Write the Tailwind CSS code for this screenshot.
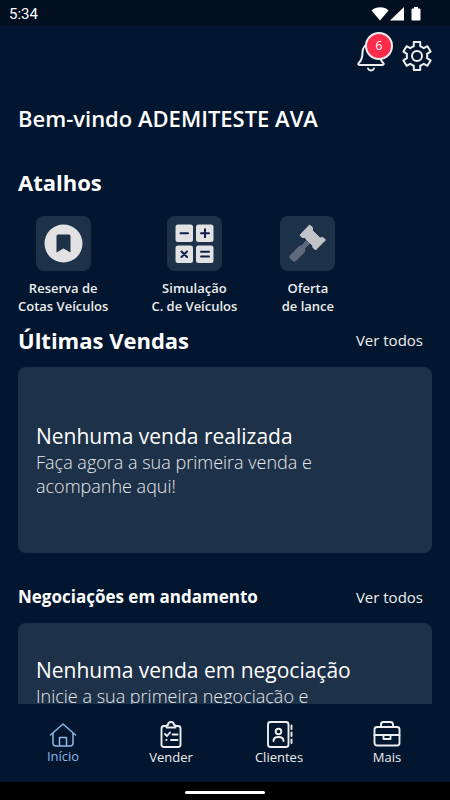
<!DOCTYPE html>
<html lang="pt-BR">
<head>
    <meta charset="UTF-8">
    <meta name="viewport" content="width=device-width, initial-scale=1.0">
    <title>Início</title>
    <script src="https://cdn.jsdelivr.net/npm/@tailwindcss/browser@4"></script>
</head>
<body class="flex h-screen flex-col overflow-hidden bg-[#02162f] font-['Open_Sans',sans-serif] text-white">
    <!-- Status bar -->
    <div class="flex h-[26px] shrink-0 items-center justify-between bg-[#020f20] pt-[2px] pr-[29px] pl-[9px]">
        <span class="font-[Roboto,sans-serif] text-[15px]">5:34</span>
        <svg class="h-[14px] w-[50px]" viewBox="0 0 50 14" fill="#fff" aria-hidden="true">
            <path d="M0.500 3.500C5 -0.800 13.500 -0.800 17.500 3.500L9 13.500Z"/>
            <path d="M33 0V13.500H19Z"/>
            <path d="M43 0H47V1.500H48.500Q49.500 1.500 49.500 2.500V12.500Q49.500 13.500 48.500 13.500H41.500Q40.500 13.500 40.500 12.500V2.500Q40.500 1.500 41.500 1.500H43Z"/>
        </svg>
    </div>

    <header class="flex h-[60px] shrink-0 items-center justify-end gap-[14px] pr-[17px]">
        <button type="button" class="relative" aria-label="Notificações">
            <svg class="h-8 w-8" viewBox="0 0 32 32" fill="none" stroke="#eee" stroke-width="2" stroke-linecap="round" stroke-linejoin="round">
                <path d="M16 3.500C10.500 3.500 7.500 7.500 7.500 12.500C7.500 18 6.500 20.500 3.800 23C2.800 24.200 3.300 25 4.500 25H27.500C28.700 25 29.200 24.200 28.200 23C25.500 20.500 24.500 18 24.500 12.500C24.500 7.500 21.500 3.500 16 3.500Z"/>
                <path d="M13 28.500C14 31 18 31 19 28.500"/>
            </svg>
            <span class="absolute -top-2 left-[10px] flex h-7 w-7 items-center justify-center rounded-full border-2 border-[#eee] bg-[#fe2b4b] text-[12px]">6</span>
        </button>
        <button type="button" aria-label="Configurações">
            <svg class="h-8 w-8" viewBox="0 0 32 32" fill="none" stroke="#eee" stroke-width="2" stroke-linejoin="round">
                <path d="M12.800 2H19.200V6.200Q21.200 6.800 22.800 8.200L26.400 6.200L29.600 11.600L26 13.800Q26.500 16 26 18.200L29.600 20.400L26.400 25.800L22.800 23.800Q21.200 25.200 19.200 25.800V30H12.800V25.800Q10.800 25.200 9.200 23.800L5.600 25.800L2.400 20.400L6 18.200Q5.500 16 6 13.800L2.400 11.600L5.600 6.200L9.200 8.200Q10.800 6.800 12.800 6.200Z"/>
                <circle cx="16" cy="16" r="5"/>
            </svg>
        </button>
    </header>

    <main class="min-h-0 flex-1 overflow-hidden px-[18px] pt-4">
        <h1 class="text-[22px] leading-8 font-semibold">Bem-vindo ADEMITESTE AVA</h1>

        <h2 class="mt-8 text-[22px] leading-8 font-bold">Atalhos</h2>
        <div class="mt-[18px] flex gap-[43px] text-center text-[13px] leading-[18px] font-semibold text-[#eee]">
            <button type="button" class="flex flex-col items-center gap-2">
                <span class="flex h-[55px] w-[55px] items-center justify-center rounded-lg bg-[#1d3149]">
                    <svg class="h-[39px] w-[39px]" viewBox="0 0 39 39">
                        <circle cx="19.500" cy="19.500" r="19" fill="#e2e2e4"/>
                        <path d="M12.500 12Q12.500 10.500 14 10.500H25Q26.500 10.500 26.500 12V28.500L19.500 24.500L12.500 28.500Z" fill="#1d3149"/>
                    </svg>
                </span>
                <span>Reserva de<br>Cotas Veículos</span>
            </button>
            <button type="button" class="flex flex-col items-center gap-2">
                <span class="flex h-[55px] w-[55px] items-center justify-center rounded-lg bg-[#1d3149]">
                    <svg class="h-[39px] w-[39px]" viewBox="0 0 39 39" stroke="#101d4a" stroke-width="2" stroke-linecap="round">
                        <g fill="#e2e2e4" stroke="none">
                            <rect x="0.500" y="0.500" width="17.500" height="17.500" rx="2.500"/>
                            <rect x="21" y="0.500" width="17.500" height="17.500" rx="2.500"/>
                            <rect x="0.500" y="21.500" width="17.500" height="17.500" rx="2.500"/>
                            <rect x="21" y="21.500" width="17.500" height="17.500" rx="2.500"/>
                        </g>
                        <path d="M5.500 9.300H13M26 9.300H34M30 5.300V13.300M6.500 27.500L12 33M12 27.500L6.500 33M26 27.800H34M26 32.500H34"/>
                    </svg>
                </span>
                <span>Simulação<br>C. de Veículos</span>
            </button>
            <button type="button" class="flex flex-col items-center gap-2">
                <span class="flex h-[55px] w-[55px] items-center justify-center rounded-lg bg-[#1d3149]">
                    <svg class="h-[39px] w-[39px]" viewBox="0 0 39 39" stroke-linejoin="round">
                        <path d="M18.500 16L22 19.500L17.500 24L17 28L8 37Q6 38.500 4.500 37L2 34.500Q0.500 33 2 31.500L11 22L14 21Z" fill="#5f6b7d"/>
                        <path d="M21.500 1L24.500 3.500L24.500 6.500L32 14L35 13.500L37.500 16L27.500 26L25 23.500L24.500 21.500L16.500 13.500L14 13.500L12 11Z" fill="#c2c3c6" stroke="#c2c3c6"/>
                    </svg>
                </span>
                <span>Oferta<br>de lance</span>
            </button>
        </div>

        <section>
            <div class="mt-[9px] flex items-center justify-between pr-[9px]">
                <h2 class="text-[22px] leading-8 font-bold">Últimas Vendas</h2>
                <a href="#" class="text-[15px] text-[#eee]">Ver todos</a>
            </div>
            <div class="mt-[11px] rounded-lg bg-[#1d3149] px-[18px] py-[55px]">
                <h3 class="text-[21px] leading-7 font-normal">Nenhuma venda realizada</h3>
                <p class="max-w-[300px] text-[18px] leading-6 font-light text-[#e6e8ec]">Faça agora a sua primeira venda e acompanhe aqui!</p>
            </div>
        </section>

        <section>
            <div class="mt-7 flex items-center justify-between pr-[9px]">
                <h2 class="text-[17px] leading-8 font-bold">Negociações em andamento</h2>
                <a href="#" class="text-[15px] text-[#eee]">Ver todos</a>
            </div>
            <div class="mt-[10px] rounded-lg bg-[#1d3149] px-[18px] py-[33px]">
                <h3 class="text-[21px] leading-7 font-normal">Nenhuma venda em negociação</h3>
                <p class="max-w-[300px] text-[18px] leading-6 font-light text-[#e6e8ec]">Inicie a sua primeira negociação e</p>
            </div>
        </section>
    </main>

    <nav class="grid h-[78px] shrink-0 grid-cols-4 px-[9px] pt-4 text-[13px] leading-[18px] text-[#eee]">
        <a href="#" class="flex flex-col items-center text-[#8fb8e8]" aria-current="page">
            <svg class="h-[27px] w-7" viewBox="0 0 28 27" fill="none" stroke="currentColor" stroke-width="1.500" stroke-linecap="round" stroke-linejoin="round">
                <path d="M1.500 15L14 4L26.500 15M4 13V23Q4 26 7 26H21Q24 26 24 23V13M10.500 26V17.500H17.500V26"/>
            </svg>
            Início
        </a>
        <a href="#" class="flex flex-col items-center">
            <svg class="h-7 w-7" viewBox="0 0 28 28" fill="none" stroke="currentColor" stroke-width="1.900" stroke-linecap="round" stroke-linejoin="round">
                <path d="M9 6H7Q4.500 6 4.500 8.500V24.500Q4.500 27 7 27H21Q23.500 27 23.500 24.500V8.500Q23.500 6 21 6H19M9.500 7.500H18.500V6Q18.500 5 17 5Q17 2 14 2T11 5Q9.500 5 9.500 6Z"/>
                <path d="M8 14L10 16L13 12.500M15.500 14.500H20.500M14 20H20.500M9.300 20H9.500"/>
            </svg>
            Vender
        </a>
        <a href="#" class="flex flex-col items-center">
            <svg class="h-7 w-7" viewBox="0 0 28 28" fill="none" stroke="currentColor" stroke-width="1.900" stroke-linecap="round" stroke-linejoin="round">
                <rect x="3" y="2" width="20.500" height="25" rx="2.500"/>
                <circle cx="13.500" cy="11.500" r="2.800"/>
                <path d="M8.500 21Q8.500 17 13.500 17T18.500 21M26.500 5.500V9M26.500 12.500V16M26.500 19.500V23"/>
            </svg>
            Clientes
        </a>
        <a href="#" class="flex flex-col items-center">
            <svg class="h-7 w-7" viewBox="0 0 28 28" fill="none" stroke="currentColor" stroke-width="1.900" stroke-linecap="round" stroke-linejoin="round">
                <rect x="1.500" y="7" width="25" height="18.500" rx="2.500"/>
                <path d="M8 7V4.500Q8 2 10.500 2H17.500Q20 2 20 4.500V7M1.500 15H26.500M10.500 15V19H17.500V15"/>
            </svg>
            Mais
        </a>
    </nav>

    <!-- System gesture bar -->
    <div class="flex h-[18px] shrink-0 items-center justify-center bg-black pt-[2px]">
        <div class="h-[3px] w-20 rounded-full bg-white"></div>
    </div>
</body>
</html>
